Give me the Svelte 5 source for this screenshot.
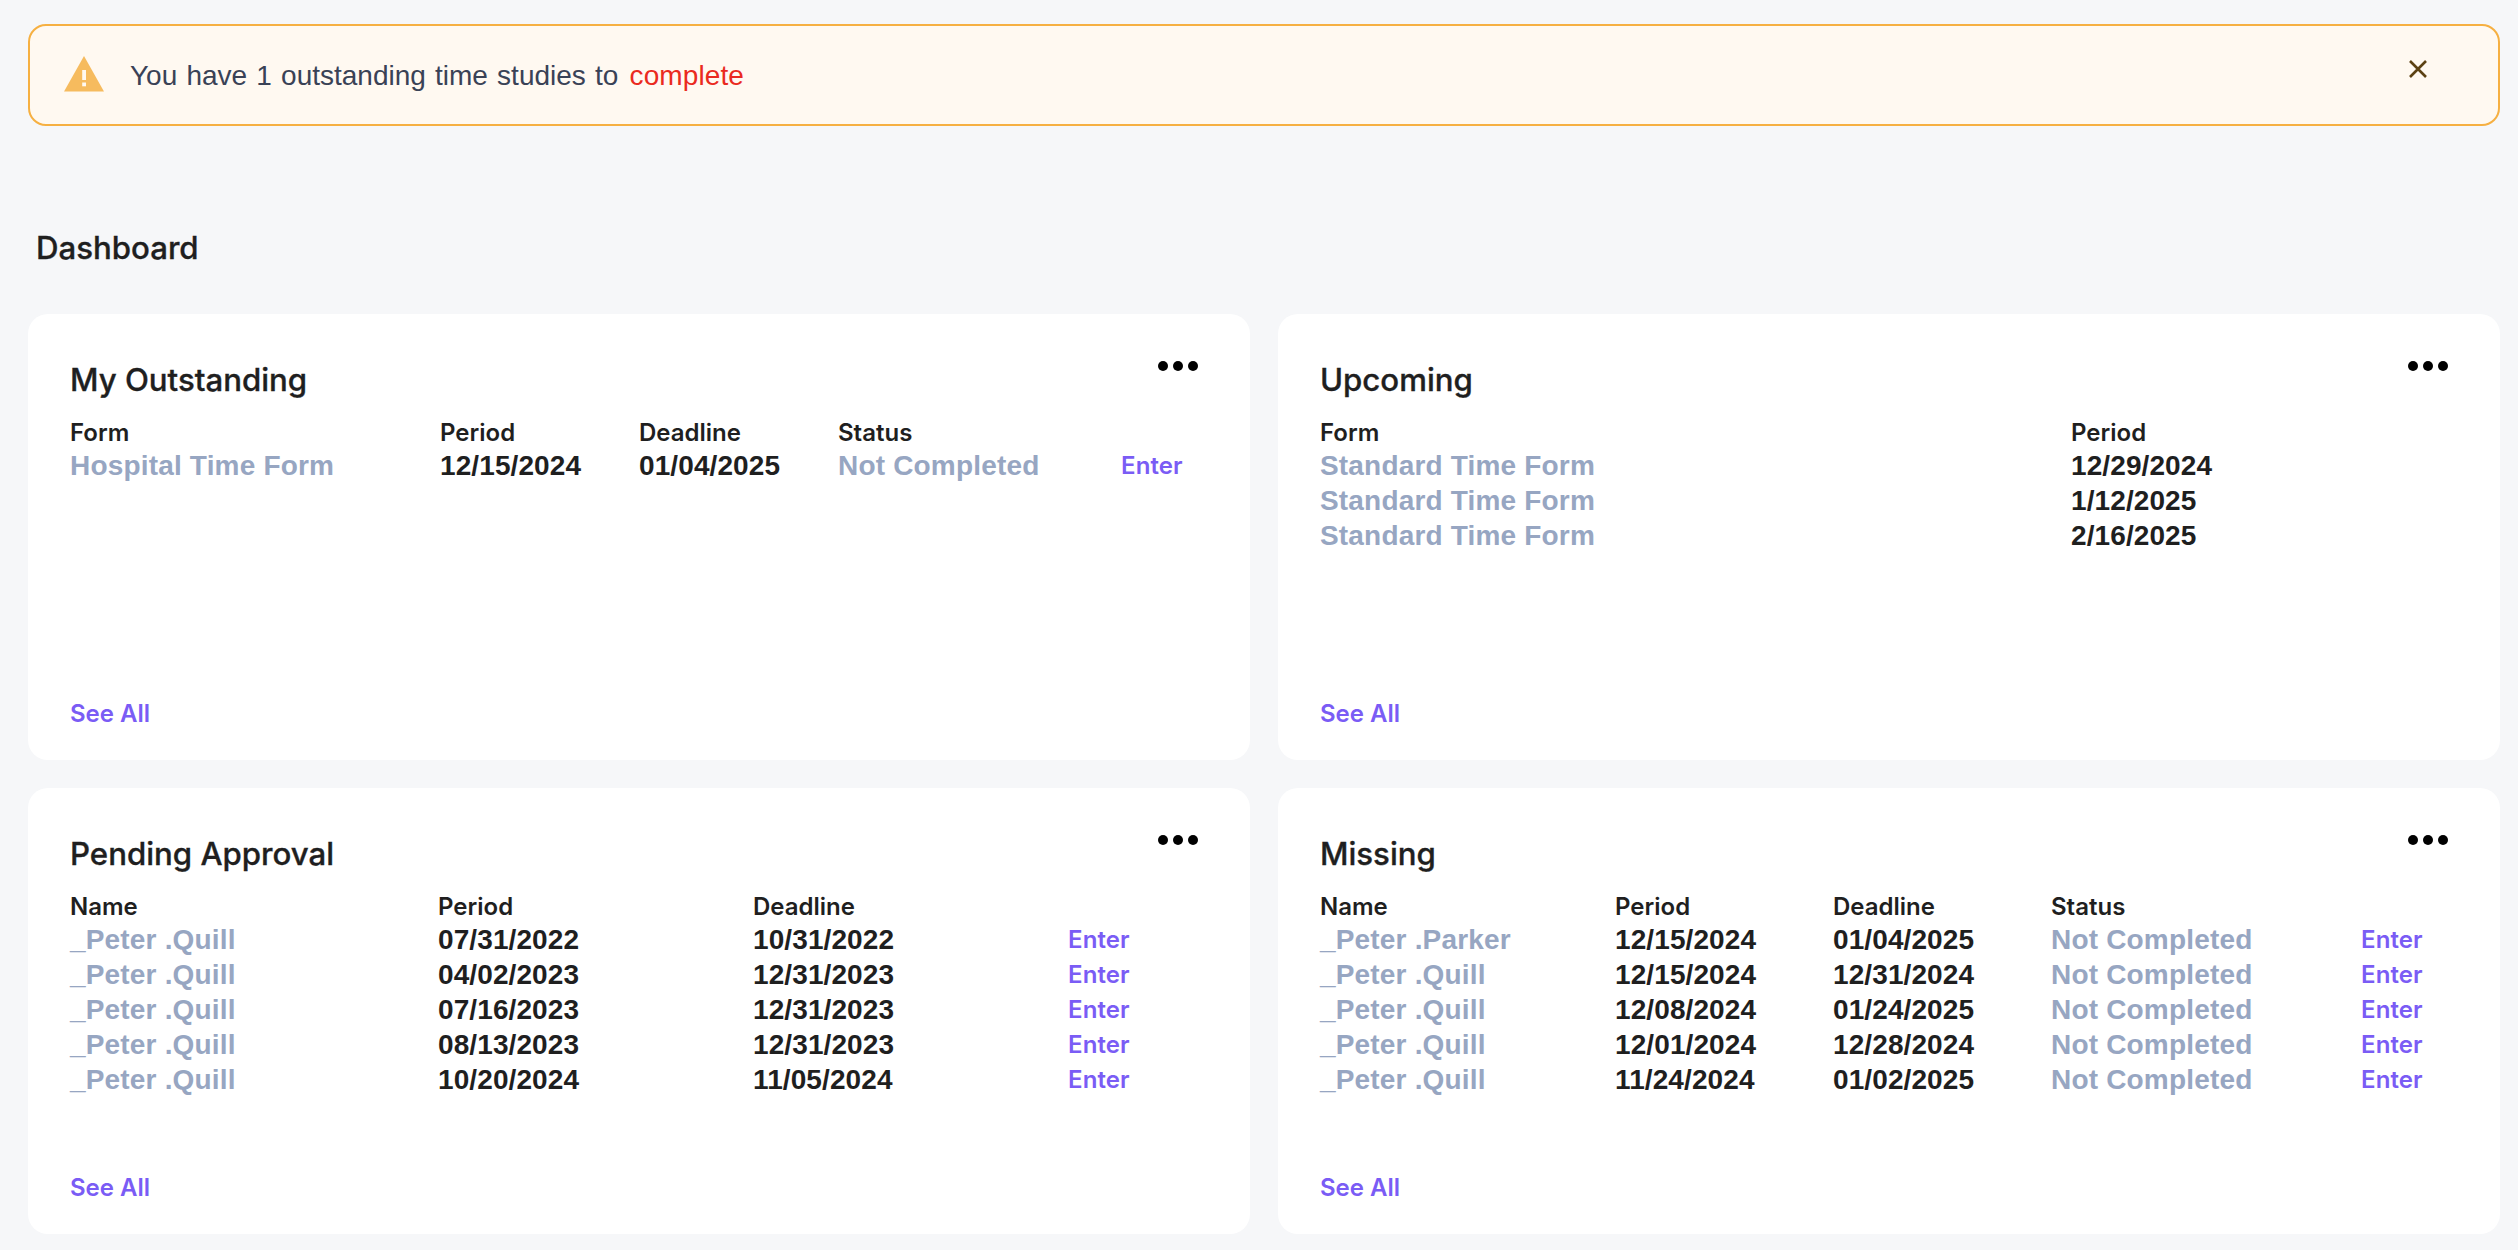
<script>
  const cards = [
    {
      title: 'My Outstanding', cols: 'c-out',
      head: ['Form', 'Period', 'Deadline', 'Status', ''],
      rows: [['Hospital Time Form', '12/15/2024', '01/04/2025', 'Not Completed', 'Enter']]
    },
    {
      title: 'Upcoming', cols: 'c-up',
      head: ['Form', 'Period'],
      rows: [
        ['Standard Time Form', '12/29/2024'],
        ['Standard Time Form', '1/12/2025'],
        ['Standard Time Form', '2/16/2025']
      ]
    },
    {
      title: 'Pending Approval', cols: 'c-pend',
      head: ['Name', 'Period', 'Deadline', ''],
      rows: [
        ['_Peter .Quill', '07/31/2022', '10/31/2022', 'Enter'],
        ['_Peter .Quill', '04/02/2023', '12/31/2023', 'Enter'],
        ['_Peter .Quill', '07/16/2023', '12/31/2023', 'Enter'],
        ['_Peter .Quill', '08/13/2023', '12/31/2023', 'Enter'],
        ['_Peter .Quill', '10/20/2024', '11/05/2024', 'Enter']
      ]
    },
    {
      title: 'Missing', cols: 'c-miss',
      head: ['Name', 'Period', 'Deadline', 'Status', ''],
      rows: [
        ['_Peter .Parker', '12/15/2024', '01/04/2025', 'Not Completed', 'Enter'],
        ['_Peter .Quill', '12/15/2024', '12/31/2024', 'Not Completed', 'Enter'],
        ['_Peter .Quill', '12/08/2024', '01/24/2025', 'Not Completed', 'Enter'],
        ['_Peter .Quill', '12/01/2024', '12/28/2024', 'Not Completed', 'Enter'],
        ['_Peter .Quill', '11/24/2024', '01/02/2025', 'Not Completed', 'Enter']
      ]
    }
  ];

  function cellClass(v) {
    if (v === 'Enter') return 'enter';
    if (/[A-Za-z]/.test(v)) return 'muted';
    return 'date';
  }
</script>

<div class="page">
  <div class="alert">
    <svg class="warn" viewBox="0 0 40 36" width="40" height="36" aria-hidden="true">
      <path d="M20 0 L40 35.5 L0 35.5 Z" fill="#f6bb5e" />
      <rect x="18.2" y="14" width="3.8" height="10" fill="#fff9f1" />
      <rect x="18.2" y="26.5" width="3.8" height="3.8" fill="#fff9f1" />
    </svg>
    <p class="msg">You have 1 outstanding time studies to <span class="red">complete</span></p>
    <svg class="close" viewBox="0 0 18 18" width="18" height="18" aria-hidden="true">
      <path d="M1 1 L17 17 M17 1 L1 17" stroke="#5c4213" stroke-width="2.6" fill="none" />
    </svg>
  </div>

  <h1>Dashboard</h1>

  <div class="grid">
    {#each cards as card}
      <section class="card">
        <div class="dots"><i></i><i></i><i></i></div>
        <h2>{card.title}</h2>
        <div class="table {card.cols}">
          {#each card.head as h}
            <div class="th">{h}</div>
          {/each}
          {#each card.rows as row}
            {#each row as v}
              <div class={cellClass(v)}>{v}</div>
            {/each}
          {/each}
        </div>
        <div class="see">See All</div>
      </section>
    {/each}
  </div>
</div>

<style>
  :global(body) {
    margin: 0;
    background: #f6f7f9;
    font-family: "Liberation Sans", Arial, sans-serif;
  }
  .page {
    padding: 24px 18px 16px 28px;
    box-sizing: border-box;
    min-height: 1250px;
  }
  .alert {
    box-sizing: border-box;
    height: 102px;
    border: 2px solid #f6b042;
    border-radius: 18px;
    background: #fff9f1;
    display: flex;
    align-items: center;
    padding: 2px 71px 0 34px;
  }
  .warn { flex: none; margin-right: 26px; margin-bottom: 5px; }
  .msg {
    margin: 0;
    flex: 1;
    font-size: 28px;
    word-spacing: 1.4px;
    color: #3a4256;
  }
  .red { color: #ea2a20; margin-left: 2px; letter-spacing: 0.1px; }
  .close { flex: none; margin-bottom: 14px; }
  h1 {
    margin: 102px 0 0 8px;
    font-family: Inter, "Liberation Sans", sans-serif;
    font-size: 31.2px;
    line-height: 40px;
    font-weight: 500;
    -webkit-text-stroke: 0.35px #1f1f1f;
    color: #1f1f1f;
  }
  .grid {
    margin-top: 46px;
    display: grid;
    grid-template-columns: 1222px 1222px;
    grid-auto-rows: 446px;
    gap: 28px;
  }
  .card {
    position: relative;
    box-sizing: border-box;
    background: #fff;
    border-radius: 20px;
    padding: 46px 42px 0 42px;
    display: flex;
    flex-direction: column;
  }
  .dots {
    position: absolute;
    top: 47px;
    right: 52px;
    display: flex;
    gap: 5px;
  }
  .dots i {
    width: 10px;
    height: 10px;
    border-radius: 50%;
    background: #000;
  }
  h2 {
    margin: 0;
    font-family: Inter, "Liberation Sans", sans-serif;
    font-size: 31.2px;
    line-height: 40px;
    font-weight: 500;
    -webkit-text-stroke: 0.35px #1f1f1f;
    color: #1f1f1f;
  }
  .table {
    margin-top: 16px;
    display: grid;
    grid-template-rows: 32px;
    grid-auto-rows: 35px;
    font-size: 28px;
    line-height: 35px;
    font-weight: 700;
  }
  .c-out { grid-template-columns: 370px 199px 199px 283px 1fr; }
  .c-up { grid-template-columns: 751px 1fr; }
  .c-pend { grid-template-columns: 368px 315px 315px 1fr; }
  .c-miss { grid-template-columns: 295px 218px 218px 310px 1fr; }
  .th {
    font-family: Inter, "Liberation Sans", sans-serif;
    font-size: 24px;
    line-height: 33px;
    font-weight: 600;
    color: #1f1f1f;
  }
  .date { color: #1f1f1f; letter-spacing: 0.1px; }
  .muted { color: #97a6c2; letter-spacing: 0.18px; }
  .enter {
    font-family: Inter, "Liberation Sans", sans-serif;
    font-size: 24px;
    font-weight: 600;
    letter-spacing: 0.1px;
    color: #7a5cf5;
  }
  .see {
    font-family: Inter, "Liberation Sans", sans-serif;
    margin-top: auto;
    margin-bottom: 30px;
    font-size: 24px;
    line-height: 32px;
    font-weight: 600;
    color: #7a5cf5;
  }
</style>
